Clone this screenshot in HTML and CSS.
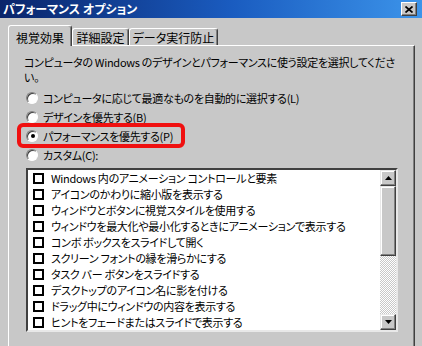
FILE: index.html
```html
<!DOCTYPE html>
<html lang="ja">
<head>
<meta charset="utf-8">
<link rel="stylesheet" href="styles.css">
</head>
<body>
<div class="window">
  <div class="titlebar">
    <span class="title">パフォーマンス オプション</span>
    <span class="close"><svg width="8" height="7" viewBox="0 0 8 7"><path d="M0.5 0.5 L7.5 6.5 M7.5 0.5 L0.5 6.5" stroke="#000" stroke-width="1.7" fill="none"/></svg></span>
  </div>
  <div class="tabs">
    <div class="tab tab-active tab-w1">視覚効果</div>
    <div class="tab tab-w2">詳細設定</div>
    <div class="tab tab-w3">データ実行防止</div>
  </div>
  <div class="panel">
    <p class="desc">コンピュータの Windows のデザインとパフォーマンスに使う設定を選択してくださ<br>い。</p>
    <div class="radios">
      <div class="radio"><span class="radio-dot"></span><span>コンピュータに応じて最適なものを自動的に選択する(L)</span></div>
      <div class="radio"><span class="radio-dot"></span><span>デザインを優先する(B)</span></div>
      <div class="radio radio-marked"><span class="radio-dot radio-on"></span><span>パフォーマンスを優先する(P)</span><span class="highlight"></span></div>
      <div class="radio"><span class="radio-dot"></span><span>カスタム(C):</span></div>
    </div>
    <div class="listbox">
      <ul class="items">
        <li class="item"><span class="check"></span>Windows 内のアニメーション コントロールと要素</li>
        <li class="item"><span class="check"></span>アイコンのかわりに縮小版を表示する</li>
        <li class="item"><span class="check"></span>ウィンドウとボタンに視覚スタイルを使用する</li>
        <li class="item"><span class="check"></span>ウィンドウを最大化や最小化するときにアニメーションで表示する</li>
        <li class="item"><span class="check"></span>コンボ ボックスをスライドして開く</li>
        <li class="item"><span class="check"></span>スクリーン フォントの縁を滑らかにする</li>
        <li class="item"><span class="check"></span>タスク バー ボタンをスライドする</li>
        <li class="item"><span class="check"></span>デスクトップのアイコン名に影を付ける</li>
        <li class="item"><span class="check"></span>ドラッグ中にウィンドウの内容を表示する</li>
        <li class="item"><span class="check"></span>ヒントをフェードまたはスライドで表示する</li>
      </ul>
      <div class="scrollbar">
        <div class="sb-btn"><svg width="7" height="4" viewBox="0 0 7 4"><path d="M3.5 0 L7 4 L0 4 Z" fill="#000"/></svg></div>
        <div class="sb-thumb"></div>
        <div class="sb-track"></div>
        <div class="sb-btn"><svg width="7" height="4" viewBox="0 0 7 4"><path d="M0 0 L7 0 L3.5 4 Z" fill="#000"/></svg></div>
      </div>
    </div>
  </div>
</div>
</body>
</html>
```

FILE: styles.css
```css
* { box-sizing: border-box; }
html, body {
  margin: 0;
  padding: 0;
}
body {
  width: 422px;
  height: 346px;
  overflow: hidden;
  background: #c8c8c8;
  font-family: "Noto Sans CJK JP", "Noto Sans", sans-serif;
  font-size: 11px;
  letter-spacing: -0.3px;
  font-feature-settings: "palt";
  color: #000;
}
.window {
  width: 422px;
  height: 346px;
  display: flex;
  flex-direction: column;
}
.titlebar {
  height: 18px;
  flex: none;
  display: flex;
  align-items: center;
  justify-content: space-between;
  padding: 0 5px 0 3px;
  background: linear-gradient(to right, #0a246a 0%, #1a5cc0 55%, #3c94ea 100%);
}
.title {
  color: #fff;
  font-weight: bold;
  font-size: 12px;
  letter-spacing: 0;
  line-height: 14px;
}
.close {
  width: 16px;
  height: 14px;
  display: flex;
  align-items: center;
  justify-content: center;
  background: #c8c8c8;
  border-top: 1px solid #fff;
  border-left: 1px solid #fff;
  border-right: 1px solid #404040;
  border-bottom: 1px solid #404040;
  box-shadow: inset -1px -1px 0 #808080;
}
.tabs {
  margin-top: 7px;
  padding-left: 8px;
  height: 20px;
  flex: none;
  display: flex;
  align-items: flex-end;
  position: relative;
  z-index: 1;
}
.tab {
  height: 17px;
  padding-top: 2px;
  font-size: 12px;
  letter-spacing: 0;
  line-height: 14px;
  text-align: center;
  border-top: 1px solid #fff;
  border-left: 1px solid #fff;
  border-right: 1px solid #404040;
  box-shadow: inset -1px 0 0 #808080;
  border-radius: 3px 3px 0 0;
  background: #c8c8c8;
  white-space: nowrap;
}
.tab-active {
  height: 21px;
  margin-bottom: -1px;
  padding-top: 5px;
}
.tab-w1 { width: 64px; }
.tab-w2 { width: 57px; }
.tab-w3 { width: 89px; }
.panel {
  flex: 1;
  margin: 0 7px 0 8px;
  border-top: 1px solid #fff;
  border-left: 1px solid #fff;
  border-right: 1px solid #404040;
  box-shadow: inset -1px 0 0 #808080;
  padding: 9px 0 0 15px;
}
.desc {
  margin: 0;
  line-height: 15px;
  white-space: nowrap;
}
.radios {
  margin-top: 3px;
}
.radio {
  height: 19px;
  display: flex;
  align-items: center;
  gap: 5px;
  padding-left: 2px;
  position: relative;
  white-space: nowrap;
}
.radio-dot {
  width: 12px;
  height: 12px;
  flex: none;
  border-radius: 50%;
  background: #fff;
  border: 1px solid;
  border-color: #808080 #ffffff #ffffff #808080;
  box-shadow: inset 1px 1px 0 #404040;
  display: flex;
  align-items: center;
  justify-content: center;
}
.radio-on::after {
  content: "";
  width: 4px;
  height: 4px;
  border-radius: 50%;
  background: #000;
  margin: 1px 0 0 1px;
}
.highlight {
  position: absolute;
  left: -7px;
  top: -3px;
  width: 168px;
  height: 25px;
  border: 4px solid #f01010;
  border-radius: 6px;
  pointer-events: none;
}
.listbox {
  margin: 4px 0 0 2px;
  width: 372px;
  height: 164px;
  display: flex;
  background: #fff;
  border: 2px solid;
  border-color: #404040 #e8e8e8 #e8e8e8 #404040;
}
.items {
  flex: 1;
  margin: 0;
  padding: 0;
  list-style: none;
}
.item {
  height: 16px;
  line-height: 16px;
  display: flex;
  align-items: center;
  padding-left: 5px;
  white-space: nowrap;
}
.check {
  width: 11px;
  height: 11px;
  flex: none;
  border: 2px solid #000;
  background: #fff;
  margin-right: 7px;
}
.scrollbar {
  width: 16px;
  flex: none;
  display: flex;
  flex-direction: column;
}
.sb-btn, .sb-thumb {
  background: #c8c8c8;
  border-top: 1px solid #e8e8e8;
  border-left: 1px solid #e8e8e8;
  border-right: 1px solid #404040;
  border-bottom: 1px solid #404040;
  box-shadow: inset -1px -1px 0 #808080, inset 1px 1px 0 #fff;
}
.sb-btn {
  height: 16px;
  display: flex;
  align-items: center;
  justify-content: center;
}
.sb-thumb {
  height: 70px;
}
.sb-track {
  flex: 1;
  background-color: #fff;
  background-image: repeating-conic-gradient(#c8c8c8 0 25%, #ffffff 0 50%);
  background-size: 2px 2px;
}
```
